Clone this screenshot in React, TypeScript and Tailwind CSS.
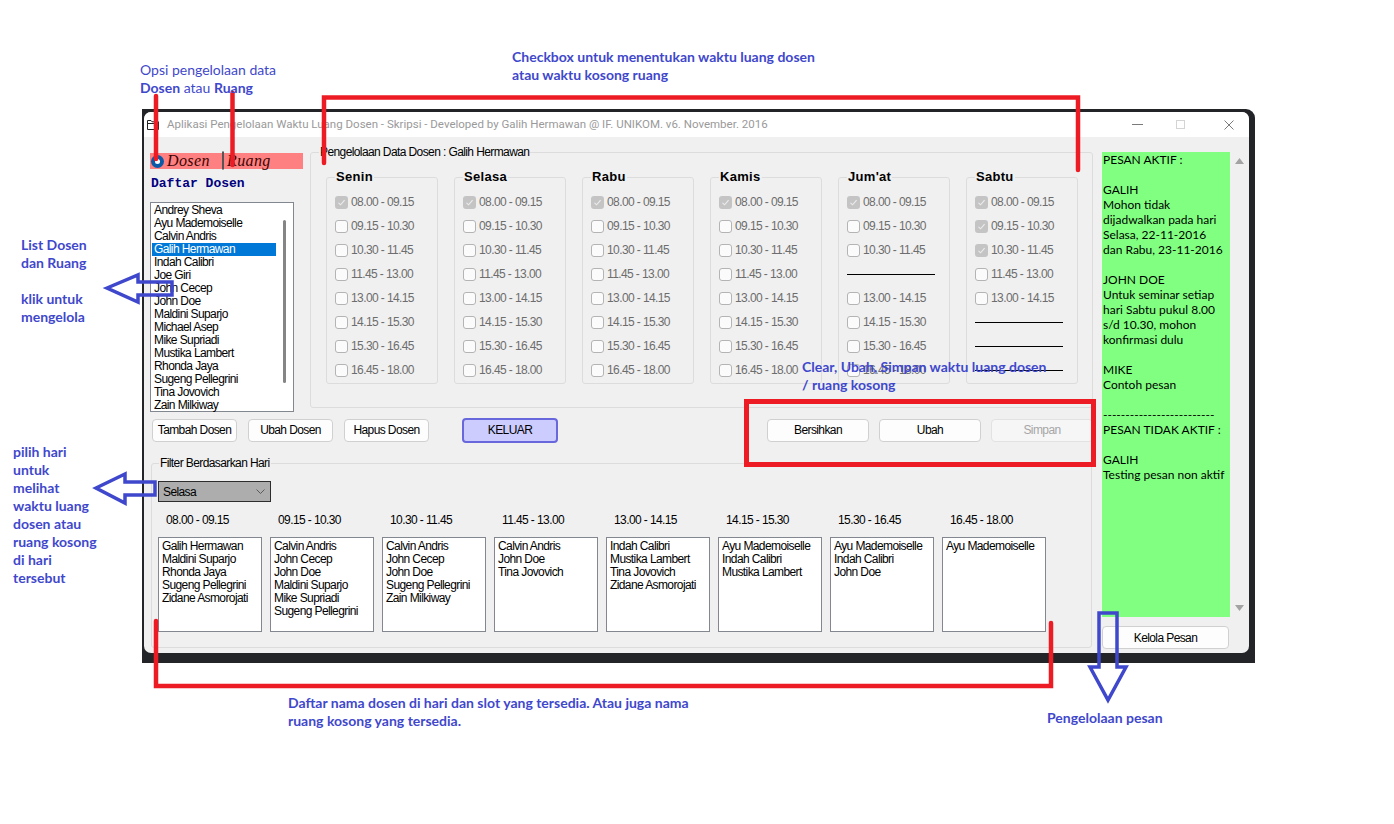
import React from "react"

const SLOTS = [
  "08.00 - 09.15",
  "09.15 - 10.30",
  "10.30 - 11.45",
  "11.45 - 13.00",
  "13.00 - 14.15",
  "14.15 - 15.30",
  "15.30 - 16.45",
  "16.45 - 18.00",
]

type Cell = "on" | "off" | "line"

const DAYS: { name: string; cells: Cell[] }[] = [
  { name: "Senin", cells: ["on", "off", "off", "off", "off", "off", "off", "off"] },
  { name: "Selasa", cells: ["on", "off", "off", "off", "off", "off", "off", "off"] },
  { name: "Rabu", cells: ["on", "off", "off", "off", "off", "off", "off", "off"] },
  { name: "Kamis", cells: ["on", "off", "off", "off", "off", "off", "off", "off"] },
  { name: "Jum'at", cells: ["on", "off", "off", "line", "off", "off", "off", "off"] },
  { name: "Sabtu", cells: ["on", "on", "on", "off", "off", "line", "line", "line"] },
]

const DOSEN = [
  "Andrey Sheva",
  "Ayu Mademoiselle",
  "Calvin Andris",
  "Galih Hermawan",
  "Indah Calibri",
  "Joe Giri",
  "John Cecep",
  "John Doe",
  "Maldini Suparjo",
  "Michael Asep",
  "Mike Supriadi",
  "Mustika Lambert",
  "Rhonda Jaya",
  "Sugeng Pellegrini",
  "Tina Jovovich",
  "Zain Milkiway",
]

const FREE: string[][] = [
  ["Galih Hermawan", "Maldini Suparjo", "Rhonda Jaya", "Sugeng Pellegrini", "Zidane Asmorojati"],
  ["Calvin Andris", "John Cecep", "John Doe", "Maldini Suparjo", "Mike Supriadi", "Sugeng Pellegrini"],
  ["Calvin Andris", "John Cecep", "John Doe", "Sugeng Pellegrini", "Zain Milkiway"],
  ["Calvin Andris", "John Doe", "Tina Jovovich"],
  ["Indah Calibri", "Mustika Lambert", "Tina Jovovich", "Zidane Asmorojati"],
  ["Ayu Mademoiselle", "Indah Calibri", "Mustika Lambert"],
  ["Ayu Mademoiselle", "Indah Calibri", "John Doe"],
  ["Ayu Mademoiselle"],
]

const PESAN = `PESAN AKTIF :

GALIH
Mohon tidak
dijadwalkan pada hari
Selasa, 22-11-2016
dan Rabu, 23-11-2016

JOHN DOE
Untuk seminar setiap
hari Sabtu pukul 8.00
s/d 10.30, mohon
konfirmasi dulu

MIKE
Contoh pesan

-------------------------
PESAN TIDAK AKTIF :

GALIH
Testing pesan non aktif`

function CheckBox({ checked }: { checked: boolean }) {
  return checked ? (
    <span className="flex h-[13px] w-[13px] shrink-0 items-center justify-center rounded-[3px] bg-[#c4c4c4]">
      <svg width="9" height="9" viewBox="0 0 9 9">
        <path d="M1.5 4.8 L3.6 6.8 L7.6 2.2" stroke="#ececec" strokeWidth="1.1" fill="none" />
      </svg>
    </span>
  ) : (
    <span className="h-[13px] w-[13px] shrink-0 rounded-[3px] border border-[#b4b4b4] bg-[#fbfbfb]" />
  )
}

function Btn({
  children,
  className = "",
}: {
  children: React.ReactNode
  className?: string
}) {
  return (
    <div
      className={
        "flex h-[23px] items-center justify-center whitespace-nowrap rounded-[4px] border border-[#d0d0d0] bg-[#fdfdfd] text-[12px] text-black " +
        className
      }
    >
      {children}
    </div>
  )
}

function DayBox({ name, cells }: { name: string; cells: Cell[] }) {
  return (
    <div className="relative h-[207px] w-[112px] rounded-[3px] border border-[#dcdcdc] pl-[8px] pt-[12px]">
      <span className="absolute -top-[9px] left-[8px] bg-[#f0f0f0] px-[1px] text-[13px] font-bold leading-[16px] tracking-[0.3px] text-black">
        {name}
      </span>
      {cells.map((cell, i) =>
        cell === "line" ? (
          <div key={i} className="flex h-[24px] items-center">
            <div className="h-px w-[88px] bg-black" />
          </div>
        ) : (
          <div key={i} className="flex h-[24px] items-center gap-[3px] text-[12px] text-[#6d6d6d]">
            <CheckBox checked={cell === "on"} />
            <span className="whitespace-nowrap leading-[16px]">{SLOTS[i]}</span>
          </div>
        )
      )}
    </div>
  )
}

function Radio({ on }: { on: boolean }) {
  return on ? (
    <span className="flex h-[13px] w-[13px] items-center justify-center rounded-full bg-[#0a5aa8]">
      <span className="h-[5px] w-[5px] rounded-full bg-white" />
    </span>
  ) : (
    <span className="h-[13px] w-[13px] rounded-full border border-[#555] bg-white" />
  )
}

export default function App() {
  return (
    <div className="relative h-[824px] w-[1394px] overflow-hidden bg-white">
      <div className="pl-[142px] pt-[109px]">
        <div className="h-[554px] w-[1113px] rounded-tr-[9px] bg-[#232427] pb-[10px] pl-[2px] pr-[6px] pt-[3px]">
          <div className="flex h-full flex-col overflow-hidden rounded-[7px] bg-[#f0f0f0] font-['Liberation_Sans',Arial,sans-serif] tracking-[-0.6px]">
            {/* title bar */}
            <div className="flex h-[25px] shrink-0 items-center bg-white">
              <svg className="ml-[3px]" width="12" height="11" viewBox="0 0 12 11">
                <path d="M0.5 1.5 H4 L5 2.8 H11.5 V10.5 H0.5 Z" fill="none" stroke="#222" strokeWidth="1" />
                <path d="M0.5 4.5 H11.5" stroke="#222" strokeWidth="1" />
                <path d="M7 6 L9 8.5" stroke="#222" strokeWidth="1" />
              </svg>
              <span className="ml-[8px] font-['Roboto',sans-serif] text-[11.5px] tracking-normal text-[#9a9a9a]">
                Aplikasi Pengelolaan Waktu Luang Dosen - Skripsi - Developed by Galih Hermawan @ IF. UNIKOM. v6. November. 2016
              </span>
              <div className="ml-auto mr-[15px] flex items-center">
                <div className="h-px w-[11px] bg-[#7a7a7a]" />
                <div className="ml-[33px] h-[9px] w-[9px] border border-[#d4d4d4]" />
                <svg className="ml-[39px]" width="10" height="10" viewBox="0 0 10 10">
                  <path d="M0.5 0.5 L9.5 9.5 M9.5 0.5 L0.5 9.5" stroke="#7a7a7a" strokeWidth="1" />
                </svg>
              </div>
            </div>

            {/* client */}
            <div className="flex h-[516px]">
              <div className="flex w-[951px] flex-col">
                <div className="mt-[15px] flex items-start">
                  {/* left column */}
                  <div className="ml-[6px] flex w-[153px] flex-col">
                    <div className="mt-[1px] flex h-[16px] items-center bg-[#ff8080]">
                      <span className="ml-[1px]">
                        <Radio on />
                      </span>
                      <span className="ml-[3px] w-[52px] font-['Liberation_Serif',serif] text-[16px] italic leading-[16px] tracking-[0.4px] text-[#3a0505]">
                        Dosen
                      </span>
                      <span className="ml-[3px]">
                        <Radio on={false} />
                      </span>
                      <span className="ml-[3px] font-['Liberation_Serif',serif] text-[16px] italic leading-[16px] tracking-[0.4px] text-[#3a0505]">
                        Ruang
                      </span>
                    </div>
                    <div className="mt-[7px] h-[16px] pl-[1px] font-['Liberation_Mono',monospace] text-[13px] font-bold leading-[16px] tracking-normal text-[#000080]">
                      Daftar Dosen
                    </div>
                    <div className="mt-[10px] flex h-[210px] w-[144px] border border-[#828790] bg-white">
                      <div className="w-[131px] pl-[1px] pt-[1px]">
                        {DOSEN.map((d) => (
                          <div
                            key={d}
                            className={
                              d === "Galih Hermawan"
                                ? "h-[13px] w-[124px] whitespace-nowrap bg-[#0078d7] pl-[2px] text-[12px] leading-[13px] text-white"
                                : "h-[13px] w-[124px] whitespace-nowrap pl-[2px] text-[12px] leading-[13px] text-black"
                            }
                          >
                            {d}
                          </div>
                        ))}
                      </div>
                      <div className="ml-[1px] mt-[17px] h-[163px] w-[3px] rounded-full bg-[#858585]" />
                    </div>
                  </div>

                  {/* data group */}
                  <div className="relative ml-[7px] h-[256px] w-[783px] rounded-[3px] border border-[#dcdcdc]">
                    <span className="absolute -top-[9px] left-[8px] whitespace-nowrap bg-[#f0f0f0] px-[1px] text-[12px] leading-[16px] text-black">
                      Pengelolaan Data Dosen : Galih Hermawan
                    </span>
                    <div className="ml-[15px] mt-[24px] flex gap-[16px]">
                      {DAYS.map((d) => (
                        <DayBox key={d.name} name={d.name} cells={d.cells} />
                      ))}
                    </div>
                  </div>
                </div>

                {/* buttons */}
                <div className="mt-[6px] flex h-[24px] items-center pl-[8px]">
                  <Btn className="w-[85px]">Tambah Dosen</Btn>
                  <Btn className="ml-[11px] w-[85px]">Ubah Dosen</Btn>
                  <Btn className="ml-[11px] w-[85px]">Hapus Dosen</Btn>
                  <div className="ml-[33px] flex h-[25px] w-[96px] items-center justify-center rounded-[4px] border-2 border-[#6868dc] bg-[#ccccff] text-[12px] text-black">
                    KELUAR
                  </div>
                  <Btn className="ml-[209px] w-[102px]">Bersihkan</Btn>
                  <Btn className="ml-[10px] w-[102px]">Ubah</Btn>
                  <div className="ml-[10px] flex h-[23px] w-[102px] items-center justify-center rounded-[4px] border border-[#e2e2e2] bg-[#f6f6f6] text-[12px] text-[#a6a6a6]">
                    Simpan
                  </div>
                </div>

                {/* filter group */}
                <div className="relative ml-[7px] mt-[21px] h-[185px] w-[941px] rounded-[3px] border border-[#dcdcdc]">
                  <span className="absolute -top-[9px] left-[7px] whitespace-nowrap bg-[#f0f0f0] px-[1px] text-[12px] leading-[16px] text-black">
                    Filter Berdasarkan Hari
                  </span>
                  <div className="ml-[6px] mt-[17px] flex h-[21px] w-[113px] items-center justify-between border border-[#2d2d2d] bg-[#adadad] pl-[4px] pr-[5px] text-[12px] text-black">
                    <span>Selasa</span>
                    <svg width="9" height="5" viewBox="0 0 9 5">
                      <path d="M0.5 0.5 L4.5 4.5 L8.5 0.5" stroke="#5a5a5a" strokeWidth="1" fill="none" />
                    </svg>
                  </div>
                  <div className="ml-[6px] mt-[10px] flex gap-[8px]">
                    {FREE.map((names, i) => (
                      <div key={i} className="flex w-[104px] flex-col">
                        <div className="h-[16px] whitespace-nowrap pl-[8px] text-[12px] leading-[16px] text-black">{SLOTS[i]}</div>
                        <div className="mt-[9px] h-[95px] border border-[#828790] bg-white pl-[3px] pt-[2px]">
                          {names.map((n, j) => (
                            <div key={j} className="h-[13px] whitespace-nowrap text-[12px] leading-[13px] text-black">
                              {n}
                            </div>
                          ))}
                        </div>
                      </div>
                    ))}
                  </div>
                </div>
              </div>

              {/* right column */}
              <div className="flex w-[154px] flex-col">
                <div className="mt-[15px] flex">
                  <div className="ml-[7px] h-[465px] w-[128px] whitespace-pre-line bg-[#80ff80] pl-[1px] font-['Lato',sans-serif] text-[12px] leading-[15px] tracking-normal text-black">
                    {PESAN}
                  </div>
                  <div className="flex h-[465px] w-[19px] flex-col items-center justify-between py-[6px]">
                    <svg width="9" height="6" viewBox="0 0 9 6">
                      <path d="M4.5 0 L9 6 L0 6 Z" fill="#a3a3a3" />
                    </svg>
                    <svg width="9" height="6" viewBox="0 0 9 6">
                      <path d="M0 0 L9 0 L4.5 6 Z" fill="#a3a3a3" />
                    </svg>
                  </div>
                </div>
                <Btn className="ml-[7px] mt-[9px] w-[127px]">Kelola Pesan</Btn>
              </div>
            </div>
          </div>
        </div>
      </div>

      {/* annotation drawing */}
      <svg className="pointer-events-none absolute left-0 top-0" width="1394" height="824">
        <g stroke="#ed1c24" strokeWidth="4.5" fill="none" strokeLinecap="round">
          <line x1="156" y1="96" x2="156" y2="159" />
          <line x1="232.5" y1="93" x2="232.5" y2="165" />
          <polyline points="324,163 324,97.5 1078,97.5 1078,170" strokeLinejoin="miter" />
          <rect x="746.5" y="401.5" width="347" height="63" strokeWidth="5" />
          <polyline points="156,621 156,686 1051,686 1051,623" />
        </g>
        <g stroke="#3f48cc" strokeWidth="3.5" fill="none" strokeLinejoin="miter">
          <polygon points="107,288 138,275 138,282 172,282 172,295 138,295 138,302" />
          <polygon points="96,488 125,474 125,482 155,482 155,495 125,495 125,503" />
          <polygon points="1099,613 1117,613 1117,667 1126,667 1108,700 1090,667 1099,667" />
        </g>
      </svg>

      {/* annotation text */}
      <div className="absolute left-[140px] top-[61px] font-['Lato',sans-serif] text-[14px] leading-[18px] text-[#3f48cc]">
        <div>Opsi pengelolaan data</div>
        <div>
          <b>Dosen</b> atau <b>Ruang</b>
        </div>
      </div>
      <div className="absolute left-[512px] top-[48px] font-['Lato',sans-serif] text-[14px] font-bold leading-[18px] text-[#3f48cc]">
        <div>Checkbox untuk menentukan waktu luang dosen</div>
        <div>atau waktu kosong ruang</div>
      </div>
      <div className="absolute left-[21px] top-[236px] font-['Lato',sans-serif] text-[14px] font-bold leading-[18px] text-[#3f48cc]">
        <div>List Dosen</div>
        <div>dan Ruang</div>
        <div>&nbsp;</div>
        <div>klik untuk</div>
        <div>mengelola</div>
      </div>
      <div className="absolute left-[13px] top-[443px] font-['Lato',sans-serif] text-[14px] font-bold leading-[18px] text-[#3f48cc]">
        <div>pilih hari</div>
        <div>untuk</div>
        <div>melihat</div>
        <div>waktu luang</div>
        <div>dosen atau</div>
        <div>ruang kosong</div>
        <div>di hari</div>
        <div>tersebut</div>
      </div>
      <div className="absolute left-[802px] top-[358px] font-['Lato',sans-serif] text-[14px] font-bold leading-[18px] text-[#3f48cc]">
        <div>Clear, Ubah, Simpan waktu luang dosen</div>
        <div>/ ruang kosong</div>
      </div>
      <div className="absolute left-[288px] top-[694px] font-['Lato',sans-serif] text-[14px] font-bold leading-[18px] text-[#3f48cc]">
        <div>Daftar nama dosen di hari dan slot yang tersedia. Atau juga nama</div>
        <div>ruang kosong yang tersedia.</div>
      </div>
      <div className="absolute left-[1047px] top-[709px] font-['Lato',sans-serif] text-[14px] font-bold leading-[18px] text-[#3f48cc]">
        Pengelolaan pesan
      </div>
    </div>
  )
}
